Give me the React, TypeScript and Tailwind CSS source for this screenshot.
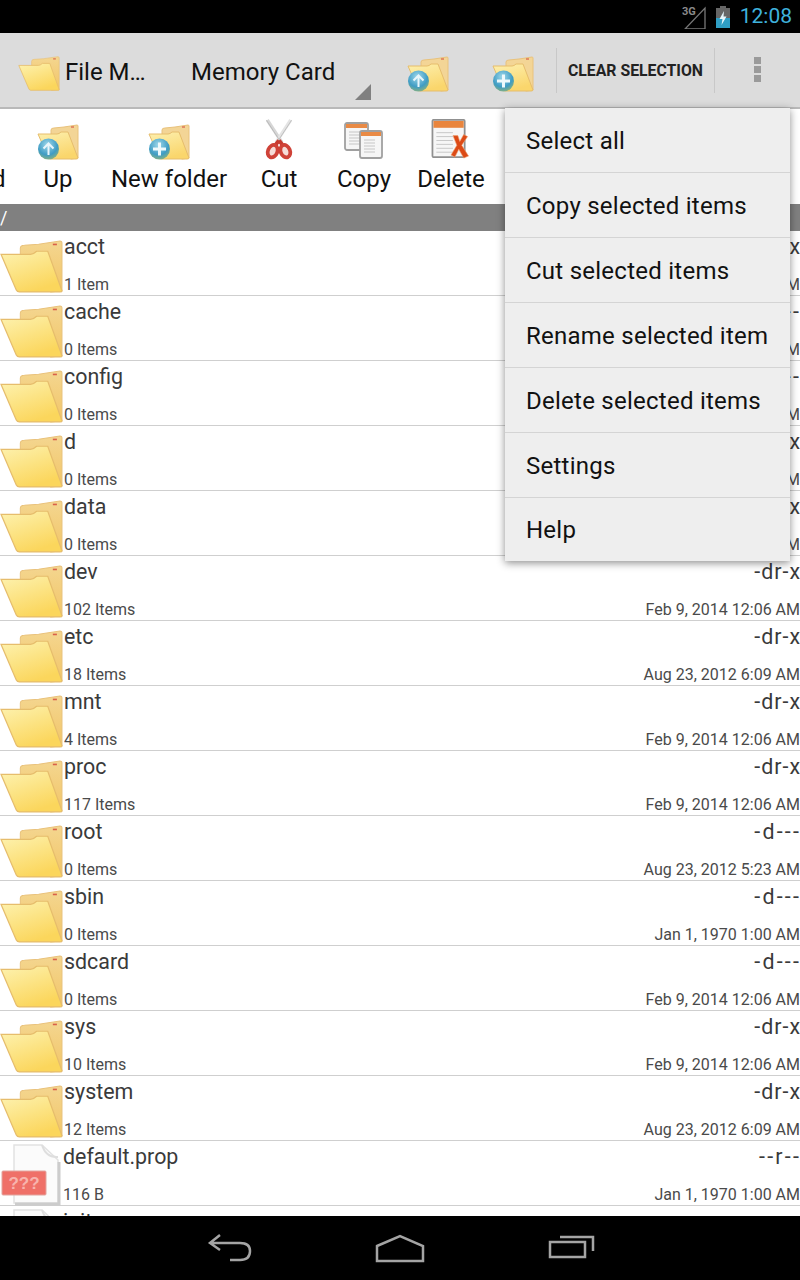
import { useId } from "react";

type Entry = { name: string; sub: string; perm: string; date: string; file?: boolean };

const entries: Entry[] = [
  { name: "acct", sub: "1 Item", perm: "-dr-x", date: "Feb 9, 2014 12:06 AM" },
  { name: "cache", sub: "0 Items", perm: "-d---", date: "Feb 9, 2014 12:06 AM" },
  { name: "config", sub: "0 Items", perm: "-d---", date: "Feb 9, 2014 12:06 AM" },
  { name: "d", sub: "0 Items", perm: "-dr-x", date: "Feb 9, 2014 12:06 AM" },
  { name: "data", sub: "0 Items", perm: "-dr-x", date: "Feb 9, 2014 12:06 AM" },
  { name: "dev", sub: "102 Items", perm: "-dr-x", date: "Feb 9, 2014 12:06 AM" },
  { name: "etc", sub: "18 Items", perm: "-dr-x", date: "Aug 23, 2012 6:09 AM" },
  { name: "mnt", sub: "4 Items", perm: "-dr-x", date: "Feb 9, 2014 12:06 AM" },
  { name: "proc", sub: "117 Items", perm: "-dr-x", date: "Feb 9, 2014 12:06 AM" },
  { name: "root", sub: "0 Items", perm: "-d---", date: "Aug 23, 2012 5:23 AM" },
  { name: "sbin", sub: "0 Items", perm: "-d---", date: "Jan 1, 1970 1:00 AM" },
  { name: "sdcard", sub: "0 Items", perm: "-d---", date: "Feb 9, 2014 12:06 AM" },
  { name: "sys", sub: "10 Items", perm: "-dr-x", date: "Feb 9, 2014 12:06 AM" },
  { name: "system", sub: "12 Items", perm: "-dr-x", date: "Aug 23, 2012 6:09 AM" },
  { name: "default.prop", sub: "116 B", perm: "--r--", date: "Jan 1, 1970 1:00 AM", file: true },
  { name: "init", sub: "", perm: "", date: "", file: true },
];

const menuItems = [
  "Select all",
  "Copy selected items",
  "Cut selected items",
  "Rename selected item",
  "Delete selected items",
  "Settings",
  "Help",
];

function OpenFolder({ className }: { className: string }) {
  const id = useId();
  return (
    <svg viewBox="0 0 62 52" className={className}>
      <defs>
        <linearGradient id={id + "b"} x1="0" y1="0" x2="0" y2="1">
          <stop offset="0" stopColor="#f4d690" />
          <stop offset="1" stopColor="#f2c566" />
        </linearGradient>
        <linearGradient id={id + "f"} x1="0" y1="0" x2="0.5" y2="1">
          <stop offset="0" stopColor="#fdf2b0" />
          <stop offset="1" stopColor="#fbd65c" />
        </linearGradient>
      </defs>
      <path d="M20 8 Q20 5 24 5 L38 4 L59 1 Q61 1 61 3 L61 50 L50 51 L20 30 Z" fill={`url(#${id}b)`} stroke="#e9c27c" strokeWidth="1" />
      <rect x="52" y="3.5" width="4" height="1.6" fill="#d9604a" />
      <path d="M1 14 L30 14 Q33 14 36 11 L47 11 L61 50 Q61 51 59 51 L19 51 Q17 51 16 49 Z" fill={`url(#${id}f)`} stroke="#e6bd6c" strokeWidth="1.2" />
    </svg>
  );
}

function ActionFolder({ className, kind }: { className: string; kind: "up" | "add" }) {
  const id = useId();
  return (
    <svg viewBox="0 0 42 36" className={className}>
      <defs>
        <linearGradient id={id + "f"} x1="0" y1="0" x2="0.4" y2="1">
          <stop offset="0" stopColor="#fdf0b0" />
          <stop offset="1" stopColor="#fad66c" />
        </linearGradient>
        <radialGradient id={id + "c"} cx="0.45" cy="0.3" r="0.8">
          <stop offset="0" stopColor="#9fd8ea" />
          <stop offset="0.6" stopColor="#3f9cc4" />
          <stop offset="1" stopColor="#9fb86a" />
        </radialGradient>
      </defs>
      <path d="M14 6 Q14 4 17 4 L27 3 L40 1 Q41 1 41 2 L41 34 L34 35 L14 22 Z" fill="#f3d596" stroke="#e9c27c" />
      <rect x="34" y="2.4" width="3" height="1.2" fill="#d9604a" />
      <path d="M1 10 L20 10 Q22 10 24 8 L31 8 L41 34 Q41 35 39 35 L13 35 Q12 35 11 33 Z" fill={`url(#${id}f)`} stroke="#e6bd6c" />
      <circle cx="11.5" cy="25" r="10.5" fill={`url(#${id}c)`} />
      {kind === "up" ? (
        <path d="M11.5 31 V19.5 M6.5 24.5 L11.5 19.5 L16.5 24.5" fill="none" stroke="#e8f6fb" strokeWidth="2" />
      ) : (
        <path d="M11.5 18.5 V31.5 M5 25 H18" fill="none" stroke="#eef9fc" strokeWidth="3" />
      )}
    </svg>
  );
}

function Scissors() {
  return (
    <svg viewBox="0 0 30 42" className="h-[41px] w-[30px]">
      <path d="M3 1 L18 24" stroke="#d6d6d6" strokeWidth="3.4" />
      <path d="M27 1 L12 24" stroke="#e4e4e4" strokeWidth="3.4" />
      <path d="M2 1 L17 24 M28 1 L13 24" stroke="#a6a6a6" strokeWidth="0.6" />
      <path d="M15 22 L11 27 M15 22 L19 27" stroke="#c63a30" strokeWidth="4" />
      <ellipse cx="8.5" cy="33" rx="4.8" ry="6.6" transform="rotate(22 8.5 33)" fill="#f6dcd8" stroke="#cf4238" strokeWidth="3.8" />
      <ellipse cx="21.5" cy="33" rx="4.8" ry="6.6" transform="rotate(-22 21.5 33)" fill="#f6dcd8" stroke="#cf4238" strokeWidth="3.8" />
    </svg>
  );
}

function DocSheet({ x, y, w, h }: { x: number; y: number; w: number; h: number }) {
  return (
    <g>
      <rect x={x} y={y} width={w} height={h} rx="2" fill="#f6f6f6" stroke="#a0a0a0" strokeWidth="1.8" />
      <rect x={x + 1} y={y + 1} width={w - 2} height="4" fill="#e98a45" />
      {[9, 12, 15, 18, 21].map((d) => (
        <line key={d} x1={x + 4} x2={x + w - 7} y1={y + d} y2={y + d} stroke="#c6c6c6" />
      ))}
    </g>
  );
}

function CopyIcon() {
  return (
    <svg viewBox="0 0 40 38" className="h-[38px] w-[40px]">
      <DocSheet x={1} y={1} w={23} h={27} />
      <DocSheet x={16} y={9} w={22} h={27} />
    </svg>
  );
}

function DeleteIcon() {
  return (
    <svg viewBox="0 0 40 42" className="h-[41px] w-[40px]">
      <rect x="1" y="1" width="33" height="38" rx="1" fill="#f6f6f6" stroke="#909090" strokeWidth="1.8" />
      <rect x="2" y="2" width="31" height="7" fill="#e9853d" />
      {[14, 18, 22, 26, 30, 34].map((d) => (
        <line key={d} x1="5" x2="22" y1={d} y2={d} stroke="#c6c6c6" />
      ))}
      <path d="M22 17 L27 17 L29 23 L33 16 L37 18 L31 27 L38 38 L33 40 L28 31 L24 39 L20 37 L26 27 Z" fill="#dc4a16" stroke="#f0a070" strokeWidth="0.6" />
    </svg>
  );
}

function FileIcon({ className }: { className: string }) {
  return (
    <svg viewBox="0 0 62 64" className={className}>
      <path d="M14 3 L42 3 L58 18 L58 61 L14 61 Z" fill="#fbfbfb" stroke="#e2e2e2" strokeWidth="1.5" />
      <path d="M15 62 L59 62 L59 20" fill="none" stroke="#cccccc" strokeWidth="3" />
      <path d="M42 3 Q46 16 58 15" fill="none" stroke="#dedede" strokeWidth="2" />
      <rect x="2" y="29" width="44" height="24" rx="1" fill="#ef7068" stroke="#e2a49e" />
      <text x="24" y="47" textAnchor="middle" fontSize="17" fontWeight="700" fill="#f7b4ae" fontFamily="'Liberation Sans', sans-serif">???</text>
    </svg>
  );
}

function ToolItem({ label, center, icon }: { label: string; center: string; icon: React.ReactNode }) {
  return (
    <div className={`flex shrink-0 flex-col items-center ${center}`}>
      <div className="flex h-[51px] items-end">{icon}</div>
      <span className="mt-[1px] text-[24px] leading-[36px] whitespace-nowrap text-[#111]">{label}</span>
    </div>
  );
}

function Row({ entry }: { entry: Entry }) {
  return (
    <div className="flex h-[65px] shrink-0 border-b border-[#cfcfcf] bg-white">
      {entry.file ? (
        <FileIcon className="mt-[1px] h-[64px] w-[62px] shrink-0" />
      ) : (
        <OpenFolder className="mt-[9px] h-[53px] w-[63px] shrink-0" />
      )}
      <div className="ml-[1px] flex min-w-0 flex-1 flex-col">
        <span className="h-[31px] text-[21.4px] leading-[32px] text-[#3a3a3a]">{entry.name}</span>
        <span className="mt-[14px] text-[16px] leading-[18px] text-[#4a4a4a]">{entry.sub}</span>
      </div>
      <div className="flex flex-col items-end">
        <span className={`-mr-[1px] h-[31px] text-[21.4px] leading-[32px] text-[#3a3a3a] ${entry.perm.endsWith("x") ? "tracking-[1px]" : "tracking-[2.2px]"}`}>
          {entry.perm}
        </span>
        <span className="mt-[14px] text-[16px] leading-[18px] text-[#4a4a4a]">{entry.date}</span>
      </div>
    </div>
  );
}

export default function App() {
  return (
    <div className="relative flex h-[1280px] w-[800px] flex-col overflow-hidden bg-white font-['Roboto',sans-serif]">
      {/* status bar */}
      <div className="flex h-[33px] shrink-0 items-center justify-end bg-black pr-[8px]">
        <svg viewBox="0 0 26 24" className="h-[24px] w-[26px]">
          <text x="1" y="10" fontSize="11" fontWeight="700" fill="#8a8a8a" fontFamily="'Roboto', sans-serif">3G</text>
          <path d="M24 3 L24 24 L4 24 Z" fill="none" stroke="#777" strokeWidth="1.3" />
        </svg>
        <svg viewBox="0 0 14 22" className="ml-[9px] h-[22px] w-[14px]">
          <rect x="4" y="0" width="6" height="3" fill="#666" />
          <rect x="0" y="2" width="14" height="20" fill="#2f9ec4" />
          <rect x="0" y="2" width="14" height="10" fill="#666" />
          <path d="M8 5 L3.5 13 H6.5 L5.5 19 L10.5 10.5 H7.5 Z" fill="#e6f6fb" />
        </svg>
        <span className="ml-[10px] text-[21px] leading-[33px] text-[#3fb2dc]">12:08</span>
      </div>

      {/* action bar */}
      <div className="flex h-[76px] shrink-0 items-start border-b-2 border-[#b9b9b9] bg-[#dcdcdc]">
        <OpenFolder className="mt-[23px] ml-[18px] h-[35px] w-[42px] shrink-0" />
        <span className="mt-[21px] ml-[5px] w-[126px] shrink-0 text-[24px] leading-[36px] text-[#111]">File M…</span>
        <div className="relative h-full w-[180px] shrink-0">
          <span className="block pt-[21px] text-[24px] leading-[36px] whitespace-nowrap text-[#111]">Memory Card</span>
          <div className="absolute right-0 bottom-[7px] h-0 w-0 border-b-[16px] border-l-[16px] border-b-[#808080] border-l-transparent" />
        </div>
        <ActionFolder kind="up" className="mt-[23px] ml-[36px] h-[36px] w-[42px] shrink-0" />
        <ActionFolder kind="add" className="mt-[23px] ml-[43px] h-[36px] w-[42px] shrink-0" />
        <div className="mt-[15px] ml-[22px] flex h-[45px] w-[159px] shrink-0 items-center justify-center border-x border-[#c8c8c8]">
          <span className="text-[15.8px] font-bold whitespace-nowrap text-[#222]">CLEAR SELECTION</span>
        </div>
        <div className="mt-[24px] ml-[39px] flex shrink-0 flex-col gap-[2px]">
          <div className="h-[7px] w-[7px] bg-[#9a9a9a]" />
          <div className="h-[7px] w-[7px] bg-[#9a9a9a]" />
          <div className="h-[7px] w-[7px] bg-[#9a9a9a]" />
        </div>
      </div>

      {/* toolbar */}
      <div className="flex h-[95px] shrink-0 items-start overflow-hidden bg-white">
        <span className="mt-[52px] ml-[-8px] w-[14px] shrink-0 text-[24px] leading-[36px] text-[#111]">d</span>
        <ToolItem label="Up" center="ml-[31px] w-[42px]" icon={<ActionFolder kind="up" className="h-[36px] w-[42px]" />} />
        <ToolItem label="New folder" center="ml-[32px] w-[116px]" icon={<ActionFolder kind="add" className="h-[36px] w-[42px]" />} />
        <ToolItem label="Cut" center="ml-[32px] w-[40px]" icon={<Scissors />} />
        <ToolItem label="Copy" center="ml-[38px] w-[54px]" icon={<CopyIcon />} />
        <ToolItem label="Delete" center="ml-[26px] w-[68px]" icon={<DeleteIcon />} />
      </div>

      {/* path */}
      <div className="h-[27px] shrink-0 bg-[#808080] text-[18px] leading-[27px] text-white">/</div>

      {/* list */}
      <div className="flex min-h-0 flex-1 flex-col overflow-hidden">
        {entries.map((entry) => (
          <Row key={entry.name} entry={entry} />
        ))}
      </div>

      {/* nav bar */}
      <div className="flex h-[64px] shrink-0 items-center justify-center bg-black">
        <svg viewBox="0 0 400 40" className="h-[40px] w-[400px] text-[#a4a4a4]" fill="none" stroke="currentColor" strokeWidth="2.5">
          <path d="M10 13 H40 Q50 13 50 21 Q50 30 40 30 H30 M20 5 L10 13 L20 20" transform="translate(0 2)" />
          <path d="M177 20 L200 10 L223 20 V35 H177 Z" transform="translate(0 -2)" />
          <path d="M360 12 H393 V26" transform="translate(0 -3)" />
          <rect x="350" y="14" width="35" height="15" />
        </svg>
      </div>

      {/* overflow menu */}
      <div className="absolute top-[108px] left-[505px] flex w-[285px] flex-col bg-[#eeeeee] shadow-[0_2px_8px_rgba(0,0,0,0.45)]">
        {menuItems.map((item, i) => (
          <div
            key={item}
            className={`flex items-center pl-[21px] text-[24px] tracking-[0.25px] text-[#111] ${i < menuItems.length - 1 ? "h-[65px] border-b border-[#d4d4d4] pt-[2px]" : "h-[63px] pt-[1px]"}`}
          >
            {item}
          </div>
        ))}
      </div>
    </div>
  );
}
